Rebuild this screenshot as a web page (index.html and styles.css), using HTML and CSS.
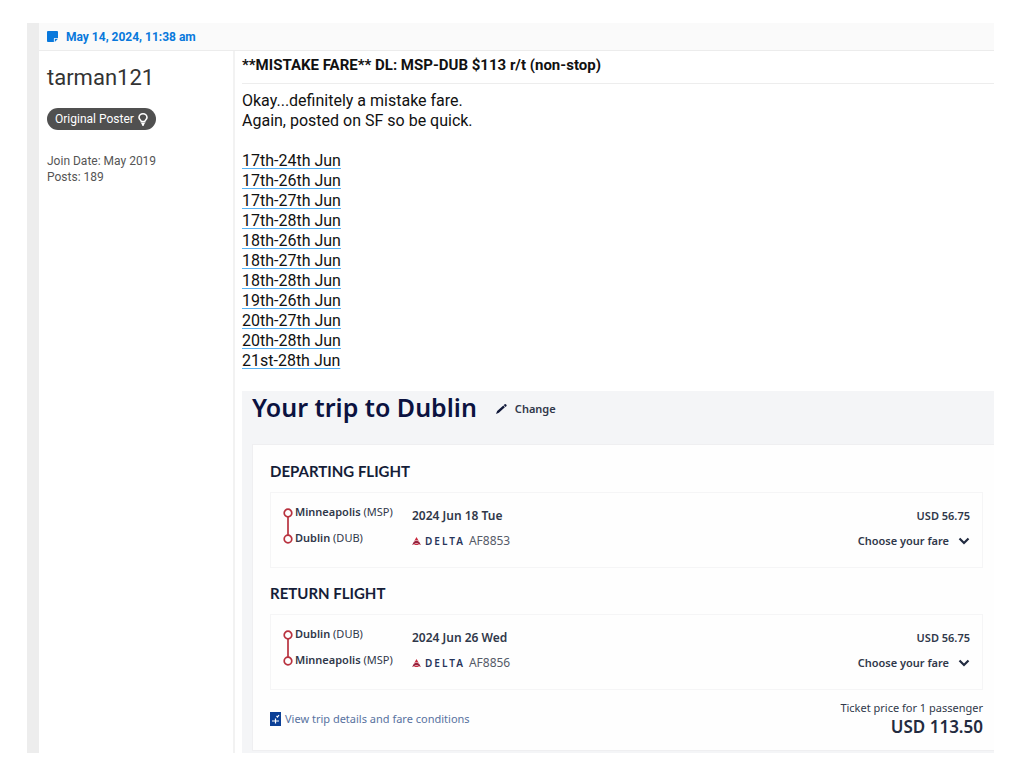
FILE: index.html
```html
<!DOCTYPE html>
<html lang="en">
<head>
<meta charset="utf-8">
<meta name="viewport" content="width=device-width, initial-scale=1">
<title>**MISTAKE FARE** DL: MSP-DUB $113 r/t (non-stop)</title>
<link rel="stylesheet" href="styles.css">
</head>
<body>
<article class="post">
  <header class="post-header">
    <svg class="note-icon" viewBox="0 0 12 12" aria-hidden="true"><path d="M1 0h10q1 0 1 1v6.500H8.500q-1 0-1 1V12H1q-1 0-1-1V1q0-1 1-1z" fill="#0878dc"/><path d="M8.500 12V8.500H12z" fill="#0878dc"/></svg>
    <time datetime="2024-05-14T11:38">May 14, 2024, 11:38 am</time>
  </header>
  <div class="post-main">
    <aside class="author">
      <h2 class="author-name">tarman121</h2>
      <span class="badge">Original Poster
        <svg class="bulb-icon" viewBox="0 0 10 13" aria-hidden="true" fill="none" stroke="#fff"><path d="M3.300 8.600C3.300 7.300 1 6.600 1 4.600a4 3.800 0 0 1 8 0C9 6.600 6.700 7.300 6.700 8.600z" stroke-width="1.600"/><path d="M3.300 10.400h3.400M4 12h2" stroke-width="1.500"/></svg>
      </span>
      <p class="author-info">Join Date: May 2019<br>Posts: 189</p>
    </aside>
    <section class="content">
      <h1 class="title">**MISTAKE FARE** DL: MSP-DUB $113 r/t (non-stop)</h1>
      <p class="message">Okay...definitely a mistake fare.<br>Again, posted on SF so be quick.</p>
      <ul class="dates">
        <li><a href="#">17th-24th Jun</a></li>
        <li><a href="#">17th-26th Jun</a></li>
        <li><a href="#">17th-27th Jun</a></li>
        <li><a href="#">17th-28th Jun</a></li>
        <li><a href="#">18th-26th Jun</a></li>
        <li><a href="#">18th-27th Jun</a></li>
        <li><a href="#">18th-28th Jun</a></li>
        <li><a href="#">19th-26th Jun</a></li>
        <li><a href="#">20th-27th Jun</a></li>
        <li><a href="#">20th-28th Jun</a></li>
        <li><a href="#">21st-28th Jun</a></li>
      </ul>
      <div class="trip">
        <div class="trip-head">
          <h2 class="trip-title">Your trip to Dublin</h2>
          <button class="change" type="button">
            <svg class="pencil-icon" viewBox="0 0 12 11" aria-hidden="true"><path d="M0 11l1.200-3.200L8 1.700l1.700 1.800-6.600 6zM8.500 1.200l1-.8q.8-.6 1.500.1l.4.400q.6.800-.1 1.500l-1 .8z" fill="#10183a"/></svg>
            Change
          </button>
        </div>
        <div class="trip-card">
          <h3 class="leg-title">Departing flight</h3>
          <div class="leg">
            <div class="route">
              <svg class="route-icon" viewBox="0 0 10 36" aria-hidden="true" fill="none" stroke="#b8323f" stroke-width="1.700"><circle cx="5" cy="5" r="3.800"/><circle cx="5" cy="31" r="3.800"/><path d="M5 9v18"/></svg>
              <div class="stops"><span><b>Minneapolis</b> (MSP)</span><span><b>Dublin</b> (DUB)</span></div>
            </div>
            <div class="flight">
              <b class="date">2024 Jun 18 Tue</b>
              <span class="carrier"><svg class="delta-icon" viewBox="0 0 10 9" aria-hidden="true"><path d="M5 0l2.500 4.500L5 3.500 2.500 4.500z" fill="#c8283c"/><path d="M5 4l3 1.300L10 9 5 6.800 0 9l2-3.700z" fill="#96203c"/><path d="M5 7.300L8.500 9h-7z" fill="#c8283c"/></svg><b class="delta">DELTA</b> AF8853</span>
            </div>
            <div class="fare">
              <b>USD 56.75</b>
              <button class="choose" type="button">Choose your fare
                <svg class="chevron-icon" viewBox="0 0 12 8" aria-hidden="true"><path d="M1.500 1.500L6 6l4.500-4.500" fill="none" stroke="#222b40" stroke-width="2.200"/></svg>
              </button>
            </div>
          </div>
          <h3 class="leg-title">Return flight</h3>
          <div class="leg">
            <div class="route">
              <svg class="route-icon" viewBox="0 0 10 36" aria-hidden="true" fill="none" stroke="#b8323f" stroke-width="1.700"><circle cx="5" cy="5" r="3.800"/><circle cx="5" cy="31" r="3.800"/><path d="M5 9v18"/></svg>
              <div class="stops"><span><b>Dublin</b> (DUB)</span><span><b>Minneapolis</b> (MSP)</span></div>
            </div>
            <div class="flight">
              <b class="date">2024 Jun 26 Wed</b>
              <span class="carrier"><svg class="delta-icon" viewBox="0 0 10 9" aria-hidden="true"><path d="M5 0l2.500 4.500L5 3.500 2.500 4.500z" fill="#c8283c"/><path d="M5 4l3 1.300L10 9 5 6.800 0 9l2-3.700z" fill="#96203c"/><path d="M5 7.300L8.500 9h-7z" fill="#c8283c"/></svg><b class="delta">DELTA</b> AF8856</span>
            </div>
            <div class="fare">
              <b>USD 56.75</b>
              <button class="choose" type="button">Choose your fare
                <svg class="chevron-icon" viewBox="0 0 12 8" aria-hidden="true"><path d="M1.500 1.500L6 6l4.500-4.500" fill="none" stroke="#222b40" stroke-width="2.200"/></svg>
              </button>
            </div>
          </div>
          <footer class="trip-foot">
            <a class="details" href="#">
              <svg class="details-icon" viewBox="0 0 11 14" aria-hidden="true"><path d="M0 0h11v14H0z" fill="#0b3f96"/><path d="M6.500 4l1 1L9 3M2 9h7M5.500 6.500v5" fill="none" stroke="#fff" stroke-width="1.200"/></svg>
              View trip details and fare conditions
            </a>
            <div class="total"><span>Ticket price for 1 passenger</span><strong>USD 113.50</strong></div>
          </footer>
        </div>
      </div>
    </section>
  </div>
</article>
</body>
</html>
```
FILE: styles.css
```css
* {
  box-sizing: border-box;
}

body {
  margin: 0;
  padding: 23px 30px 22px 27px;
  background: #fff;
  color: #111;
  font-family: Roboto, "Liberation Sans", sans-serif;
  font-size: 16px;
  line-height: 20px;
}

h1, h2, h3, p, ul {
  margin: 0;
  padding: 0;
}

svg {
  flex: none;
}

button {
  border: 0;
  padding: 0;
  background: none;
  color: inherit;
  font: inherit;
  cursor: pointer;
}

.post {
  border-left: 12px solid #ededed;
}

.post-header {
  display: flex;
  align-items: center;
  gap: 8px;
  height: 28px;
  padding-left: 8px;
  border-bottom: 1px solid #ececec;
  background: #fafafa;
  color: #0878dc;
  font-size: 12px;
  font-weight: 700;
}

.note-icon {
  width: 11px;
  height: 11px;
}

.post-main {
  display: grid;
  grid-template-columns: 196px minmax(0, 1fr);
}

.author {
  padding: 13px 8px;
  border-right: 2px solid #f2f2f2;
}

.author-name {
  color: #333;
  font-size: 22px;
  font-weight: 400;
  line-height: 28px;
}

.badge {
  display: inline-flex;
  align-items: center;
  gap: 4px;
  height: 22px;
  margin-top: 16px;
  padding: 0 8px;
  border-radius: 11px;
  background: #505050;
  color: #fff;
  font-size: 12px;
}

.bulb-icon {
  width: 10px;
  height: 13px;
}

.author-info {
  margin-top: 23px;
  color: #555;
  font-size: 12px;
  line-height: 16px;
}

.content {
  padding-left: 7px;
}

.title {
  padding: 4px 0 8px;
  border-bottom: 1px solid #ededed;
  font-size: 15px;
  line-height: 20px;
}

.message {
  margin-top: 7px;
}

.dates {
  margin: 20px 0;
  list-style: none;
}

.dates a {
  color: #111;
  text-decoration: underline 1px #55b1f3;
  text-decoration-skip-ink: none;
  text-underline-offset: 2px;
}

.trip {
  padding-bottom: 2px;
  background: #f4f5f7;
  color: #30384a;
  font-family: "Noto Sans", "Open Sans", sans-serif;
  font-size: 11px;
  line-height: 16px;
}

.trip b {
  font-weight: 600;
}

.trip-head {
  display: flex;
  align-items: center;
  gap: 19px;
  height: 53px;
  padding: 0 10px 22px;
}

.trip-title {
  color: #0b1240;
  font-size: 25px;
  font-weight: 600;
  line-height: 28px;
}

.change {
  display: flex;
  align-items: center;
  gap: 8px;
  padding-top: 4px;
  font-weight: 600;
}

.pencil-icon {
  width: 11px;
  height: 10px;
}

.trip-card {
  margin-left: 10px;
  padding: 17px 11px 12px 17px;
  border: 1px solid #efeff1;
  border-right: 0;
  background: #fefefe;
}

.leg-title {
  color: #151d38;
  font-family: Lato, sans-serif;
  font-size: 15px;
  font-weight: 700;
  line-height: 18px;
  text-transform: uppercase;
}

.leg {
  display: grid;
  grid-template-columns: 129px 1fr auto;
  height: 76px;
  margin: 12px 0 16px;
  padding: 11px 12px 0 12px;
  border: 1px solid #f5f5f6;
}

.route {
  display: flex;
  gap: 2px;
}

.route-icon {
  width: 10px;
  height: 36px;
  margin-top: 4px;
}

.stops {
  display: flex;
  flex-direction: column;
  gap: 10px;
}

.flight,
.fare {
  display: flex;
  flex-direction: column;
  gap: 9px;
  padding-top: 4px;
}

.fare {
  align-items: flex-end;
}

.date {
  font-size: 12px;
}

.carrier,
.choose {
  display: flex;
  align-items: center;
}

.carrier {
  gap: 4px;
  color: #555b68;
  font-size: 12px;
}

.choose {
  gap: 9px;
  font-weight: 600;
}

.delta-icon {
  width: 9px;
  height: 8px;
}

.delta {
  color: #26345a;
  font-size: 10px;
  letter-spacing: 2px;
}

.chevron-icon {
  width: 12px;
  height: 8px;
}

.trip-foot {
  display: flex;
  align-items: center;
  justify-content: space-between;
  margin-top: -6px;
}

.details {
  display: flex;
  align-items: center;
  gap: 4px;
  color: #5872a0;
  text-decoration: none;
}

.details-icon {
  width: 11px;
  height: 14px;
}

.total {
  display: flex;
  flex-direction: column;
  align-items: flex-end;
}

.total strong {
  color: #222b40;
  font-size: 17px;
  font-weight: 600;
  line-height: 22px;
}
```
